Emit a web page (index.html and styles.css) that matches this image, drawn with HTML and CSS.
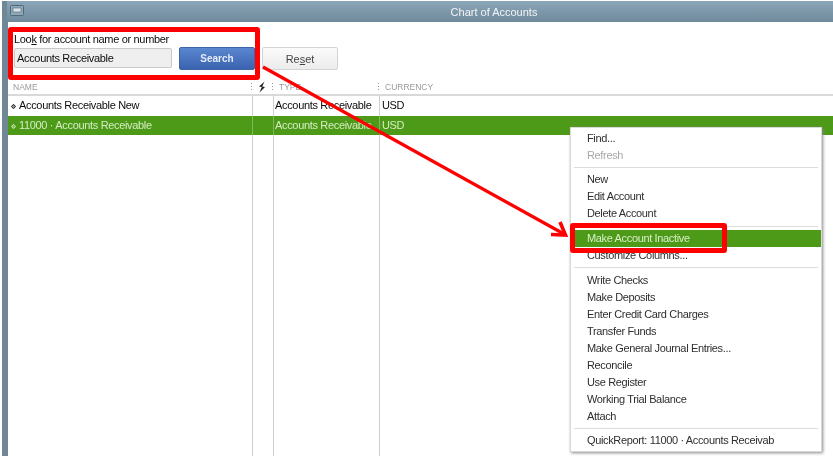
FILE: index.html
```html
<!DOCTYPE html>
<html lang="en">
<head>
<meta charset="utf-8">
<title>Chart of Accounts</title>
<link rel="stylesheet" href="styles.css">
</head>
<body>
<div class="page">
  <div class="window">
    <header class="titlebar">
      <svg class="winicon" width="14" height="11" viewBox="0 0 14 11"><rect x="0.5" y="0.5" width="13" height="10" rx="1" fill="#8fa9b9" stroke="#4f6878"/><rect x="3" y="3" width="8" height="4" fill="#d9e3e9" stroke="#4f6878" stroke-width="0.6"/></svg>
      <span class="titletext">Chart of Accounts</span>
    </header>
    <section class="searchbar">
      <div class="searchfield">
        <label class="lookfor">Loo<u>k</u> for account name or number</label>
        <div class="inputbox">Accounts Receivable</div>
      </div>
      <button class="btn btn-search">Search</button>
      <button class="btn btn-reset">Re<u>s</u>et</button>
    </section>
    <div class="table">
      <div class="row head">
        <div class="cell c-name">NAME</div>
        <div class="cell c-flag"><svg width="8" height="12" viewBox="0 0 8 12"><path d="M6.5 0.5 1 5.5 3.8 6 1.5 11.5 7 6 4.2 5.4Z" fill="#222"/></svg></div>
        <div class="cell c-type">TYPE</div>
        <div class="cell c-cur">CURRENCY</div>
      </div>
      <div class="row">
        <div class="cell c-name"><svg class="dot" width="5" height="5" viewBox="0 0 5 5"><path d="M2.5 0.3 4.7 2.5 2.5 4.7 0.3 2.5Z" fill="currentColor" fill-opacity="0.45" stroke="currentColor" stroke-width="0.9"/></svg>Accounts Receivable New</div>
        <div class="cell c-flag"></div>
        <div class="cell c-type">Accounts Receivable</div>
        <div class="cell c-cur">USD</div>
      </div>
      <div class="row selected">
        <div class="cell c-name"><svg class="dot" width="5" height="5" viewBox="0 0 5 5"><path d="M2.5 0.3 4.7 2.5 2.5 4.7 0.3 2.5Z" fill="currentColor" fill-opacity="0.45" stroke="currentColor" stroke-width="0.9"/></svg>11000 · Accounts Receivable</div>
        <div class="cell c-flag"></div>
        <div class="cell c-type">Accounts Receivable</div>
        <div class="cell c-cur">USD</div>
      </div>
      <div class="row filler">
        <div class="cell c-name"></div>
        <div class="cell c-flag"></div>
        <div class="cell c-type"></div>
        <div class="cell c-cur"></div>
      </div>
    </div>
  </div>

  <ul class="menu">
    <li>Find...</li>
    <li class="disabled">Refresh</li>
    <li class="sep"></li>
    <li>New</li>
    <li>Edit Account</li>
    <li>Delete Account</li>
    <li class="sep sep-wide sep-low"></li>
    <li class="active">Make Account Inactive</li>
    <li>Customize Columns...</li>
    <li class="sep sep-wide"></li>
    <li>Write Checks</li>
    <li>Make Deposits</li>
    <li>Enter Credit Card Charges</li>
    <li>Transfer Funds</li>
    <li>Make General Journal Entries...</li>
    <li>Reconcile</li>
    <li>Use Register</li>
    <li>Working Trial Balance</li>
    <li>Attach</li>
    <li class="sep"></li>
    <li>QuickReport: 11000 · Accounts Receivab</li>
  </ul>

  <div class="callout callout-search"></div>
  <div class="callout callout-menu"></div>
  <svg class="arrow" width="833" height="456" viewBox="0 0 833 456">
    <line x1="263" y1="67" x2="564" y2="234" stroke="#ff0000" stroke-width="3.2"/>
    <polyline points="560,222 565.5,235 551,234.5" fill="none" stroke="#ff0000" stroke-width="3.6"/>
  </svg>
</div>
</body>
</html>
```

FILE: styles.css
```css
* { box-sizing: border-box; }
html, body { margin: 0; padding: 0; }
body {
  width: 833px;
  height: 456px;
  overflow: hidden;
  background: #fff;
  font-family: "Liberation Sans", Arial, sans-serif;
  font-size: 11px;
  letter-spacing: -0.33px;
  color: #0c0c0c;
}
.page {
  position: relative;
  width: 833px;
  height: 456px;
  padding: 1px 0 0 2px;
  filter: blur(0.3px);
}
.window {
  height: 455px;
  display: flex;
  flex-direction: column;
  background: #fff;
  border-left: 6px solid #6f8796;
}
.titlebar {
  position: relative;
  flex: none;
  height: 21px;
  margin-left: -1px;
  display: flex;
  align-items: center;
  justify-content: center;
  background: linear-gradient(#8ba6b8, #6f8a9b);
  color: #f2f5f7;
}
.winicon { position: absolute; left: 3px; top: 4px; }
.titletext { margin-left: 148px; letter-spacing: 0; }
.searchbar {
  flex: none;
  height: 58px;
  display: flex;
  align-items: flex-end;
  padding: 0 0 10px 6px;
}
.searchfield { width: 165px; margin-bottom: 2px; display: flex; flex-direction: column; gap: 2px; }
.lookfor { line-height: 13px; white-space: nowrap; }
.inputbox {
  height: 20px;
  width: 158px;
  padding-left: 2px;
  line-height: 18px;
  background: #efefef;
  border: 1px solid #c9c9c9;
  border-radius: 2px;
}
.btn {
  height: 23px;
  padding: 0;
  font: inherit;
  border-radius: 2px;
}
.btn-search {
  width: 76px;
  color: #e4ecf8;
  font-size: 10px;
  font-weight: bold;
  letter-spacing: 0;
  background: linear-gradient(#5a86cf, #3a62b0);
  border: 1px solid #3c66a8;
}
.btn-reset {
  width: 76px;
  margin-left: 7px;
  color: #444;
  letter-spacing: 0;
  background: linear-gradient(#fbfbfb, #ececec);
  border: 1px solid #d4d4d4;
}
.table { flex: 1; display: flex; flex-direction: column; }
.row {
  flex: none;
  height: 20px;
  display: grid;
  grid-template-columns: 245px 21px 106px 1fr;
  line-height: 19px;
}
.cell { padding-left: 2px; border-right: 1px solid #cfcfcf; white-space: nowrap; overflow: hidden; }
.c-name { padding-left: 3px; }
.c-cur { border-right: 0; }
.c-type { padding-left: 1px; }
.head {
  height: 16px;
  line-height: 14px;
  font-size: 8.5px;
  letter-spacing: 0;
  color: #9a9a9a;
  border-bottom: 2px solid #d9d9d9;
}
.head .cell {
  border-right: 0;
  padding-left: 5px;
  background: repeating-linear-gradient(#999 0 1px, transparent 1px 3px) no-repeat right 1px top 3px / 1px 8px;
}
.head .c-flag { padding: 1px 0 0 5px; }
.head .c-cur { background: none; }
.dot { margin-right: 3px; vertical-align: 0; }
.selected { height: 19px; background: #4c9a17; color: #d6ecc4; }
.selected .cell { border-right-color: #7fb95c; }
.filler { flex: 1; }
.menu {
  position: absolute;
  left: 570px;
  top: 127px;
  width: 252px;
  height: 325px;
  margin: 0;
  padding: 2px 0;
  list-style: none;
  background: #fff;
  border: 1px solid #d8d8d8;
  box-shadow: 1px 1px 3px #8a8a8a;
  letter-spacing: -0.35px;
  color: #2e2e2e;
}
.menu li {
  height: 17px;
  line-height: 17px;
  padding-left: 16px;
  white-space: nowrap;
  overflow: hidden;
}
.menu .disabled { color: #a8a8a8; }
.menu .sep {
  height: 7px;
  margin: 0 3px;
  padding: 0;
  background: linear-gradient(#dcdcdc, #dcdcdc) no-repeat 0 3px / 100% 1px;
}
.menu .sep-wide { height: 8px; }
.menu .sep-low { background-position: 0 4px; }
.menu .active { background: #4c9a17; color: #d9eec8; margin-left: 3px; padding-left: 13px; }
.callout {
  position: absolute;
  border: 5px solid #ff0000;
  border-radius: 3px;
}
.callout-search { left: 8px; top: 27px; width: 252px; height: 53px; }
.callout-menu { left: 570px; top: 223px; width: 157px; height: 30px; }
.arrow { position: absolute; left: 0; top: 0; pointer-events: none; }
```
